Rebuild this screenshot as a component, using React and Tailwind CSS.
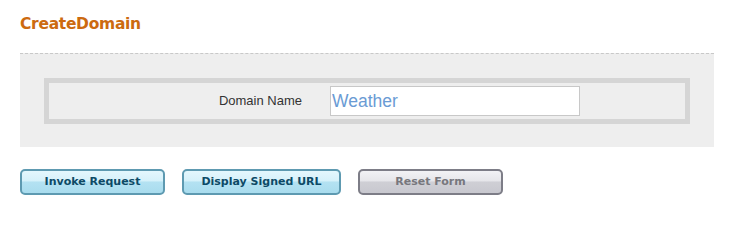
const btnBlue = "h-[26px] rounded-[5px] border-2 border-[#5e9ab1] bg-[linear-gradient(to_bottom,#e4f7fd_0%,#d6f1fa_45%,#b4e2f2_50%,#a9dcee_100%)] text-[11px] font-bold text-[#0d4a66] [font-family:'DejaVu_Sans',sans-serif]"

const App = () => {
    return (
        <div className="w-[732px] h-[218px] bg-white pt-[13px] [font-family:'Liberation_Sans',Arial,sans-serif]">
            <div className="pl-[20px] h-[24px] text-[15.5px] font-bold text-[#cc6a10] [font-family:'DejaVu_Sans',sans-serif] tracking-[-0.3px]">
                CreateDomain
            </div>
            <div className="mt-[16px] ml-[20px] w-[694px] border-t border-dashed border-[#c8c8c8] bg-[#eeeeee] pt-[24px] pb-[23px] pl-[24px]">
                <div className="w-[646px] h-[46px] border-[5px] border-[#d5d5d5] flex items-center">
                    <div className="w-[253px] text-right text-[13px] text-[#333333]">Domain Name</div>
                    <input
                        type="text"
                        defaultValue="Weather"
                        className="ml-[28px] w-[250px] h-[30px] bg-white border border-[#c8c8c8] px-[1px] text-[17.5px] text-[#6a9bd4] outline-none"
                    />
                </div>
            </div>
            <div className="mt-[22px] ml-[20px] flex gap-[17px]">
                <button className={btnBlue + " w-[145px]"}>Invoke Request</button>
                <button className={btnBlue + " w-[159px]"}>Display Signed URL</button>
                <button className="w-[145px] h-[26px] rounded-[5px] border-2 border-[#7d7d87] bg-[linear-gradient(to_bottom,#f2f2f5_0%,#e6e6ea_45%,#cfcfd5_50%,#c8c8cf_100%)] text-[11px] font-bold text-[#77777d] [font-family:'DejaVu_Sans',sans-serif]">
                    Reset Form
                </button>
            </div>
        </div>
    );
}

export default App;
